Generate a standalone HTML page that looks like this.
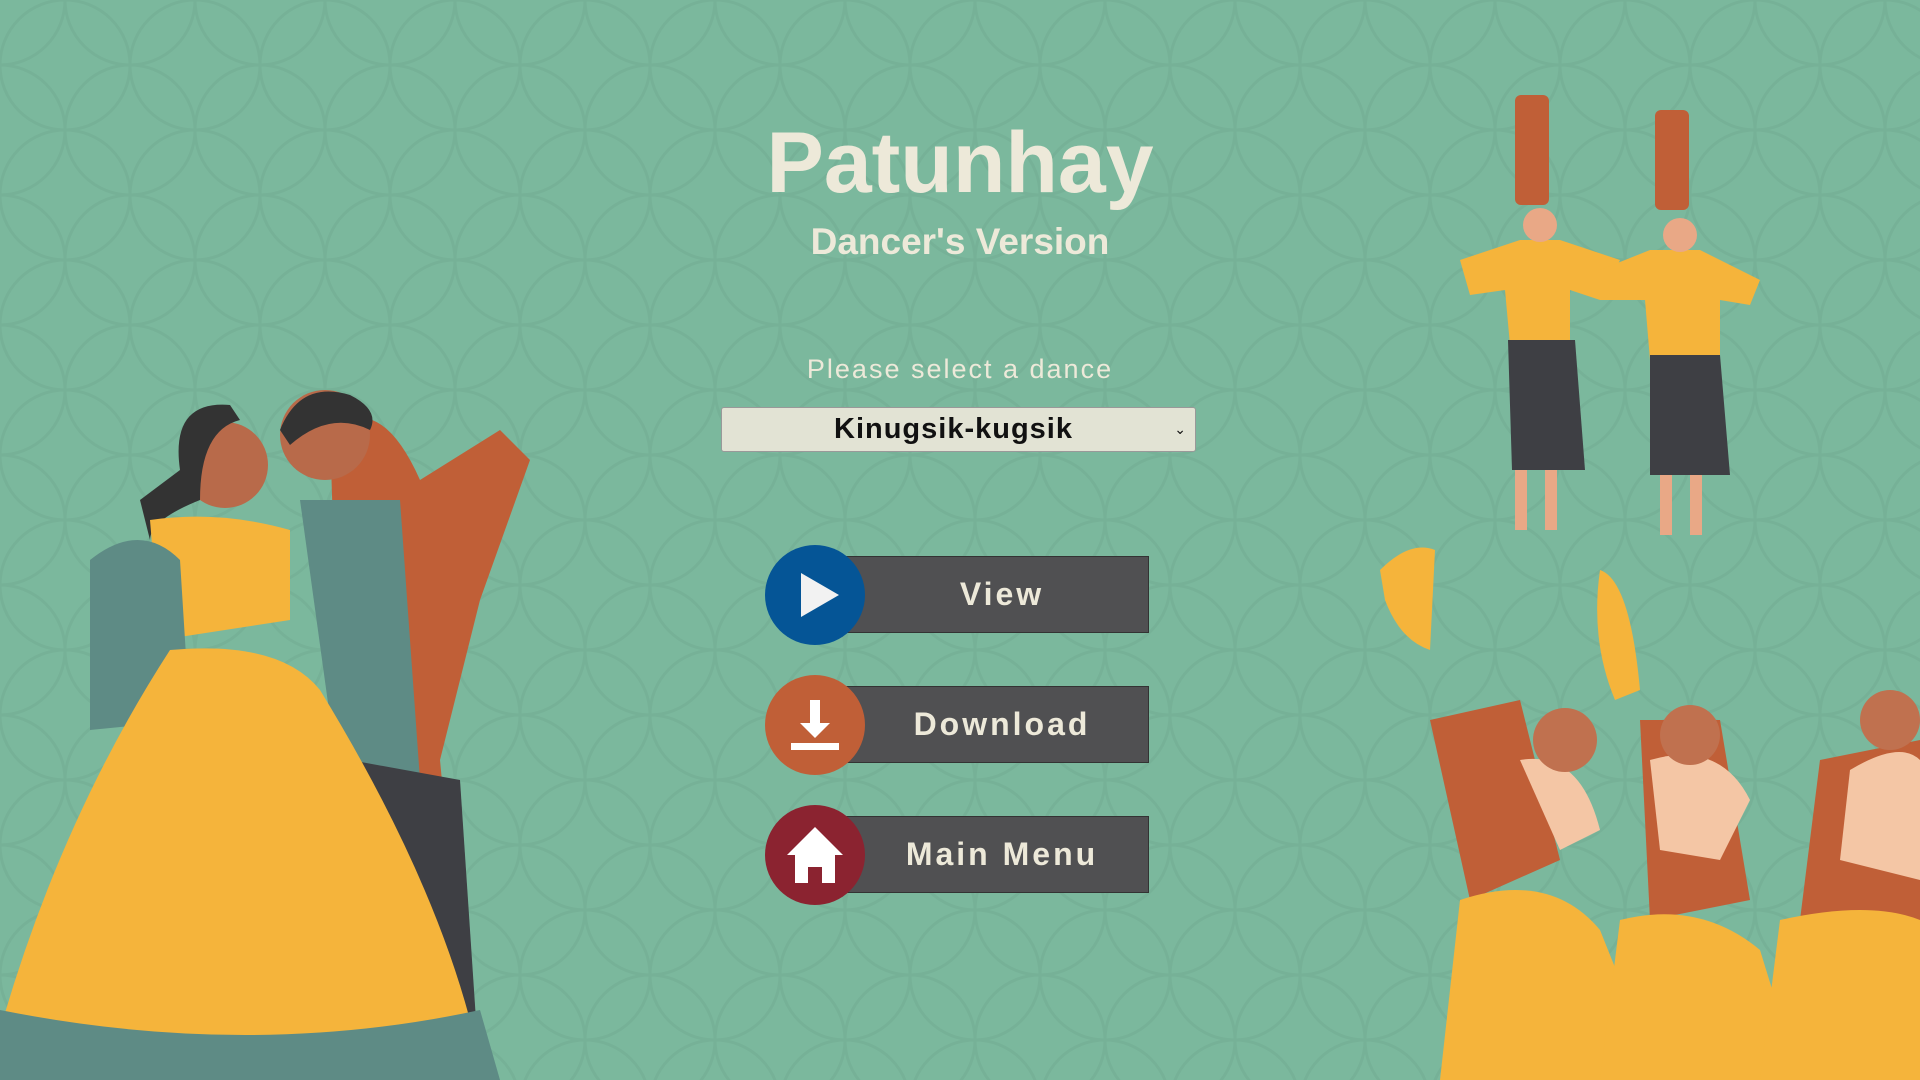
<!DOCTYPE html>
<html><head><meta charset="utf-8"><style>
html,body{margin:0;width:1920px;height:1080px;overflow:hidden;background:#7bb89d;font-family:"Liberation Sans",sans-serif}
.abs{position:absolute}
h1{position:absolute;left:0;width:1920px;top:114px;margin:0;text-align:center;font-size:86px;font-weight:bold;color:#ede9d9}
.sub{top:221px;font-size:37px;font-weight:bold;color:#ede9d9;width:1920px;text-align:center;left:0}
.ps{top:354px;font-size:27px;letter-spacing:2px;color:#ede9d9;width:1920px;text-align:center;left:0}
.sel{left:721px;top:407px;width:475px;height:45px;background:#e2e3d4;border:1px solid #999;border-radius:3px;box-sizing:border-box;font-size:29px;font-weight:bold;color:#111;text-align:center;line-height:43px;letter-spacing:1px;padding-right:10px}
.btn{left:845px;width:304px;height:77px;background:#505052;border:1px solid #333;box-sizing:border-box;color:#ede9d9;font-size:32px;font-weight:bold;letter-spacing:3px;text-align:center;line-height:75px;padding-left:10px}
.c{width:100px;height:100px;border-radius:50%;left:765px}
</style></head><body>
<svg class="abs" style="left:0;top:0" width="1920" height="1080">
<defs><pattern id="p" width="130" height="130" patternUnits="userSpaceOnUse"><g fill="none" stroke="#6fa98f" stroke-width="3" opacity=".45"><circle cx="65" cy="65" r="65"/><circle cx="0" cy="0" r="65"/><circle cx="130" cy="0" r="65"/><circle cx="0" cy="130" r="65"/><circle cx="130" cy="130" r="65"/></g></pattern></defs>
<rect width="1920" height="1080" fill="url(#p)"/>
<!-- left couple -->
<path d="M330 430 Q380 390 420 480 L500 430 L530 460 L480 600 L440 760 L470 1080 L350 1080 Z" fill="#c05f37"/>
<path d="M300 500 L400 500 L420 780 L340 790 Z" fill="#5e8b85"/>
<path d="M350 760 L460 780 L480 1080 L380 1080 Z" fill="#3e3f44"/>
<circle cx="325" cy="435" r="45" fill="#b86a4a"/><path d="M280 430 Q300 380 350 395 Q380 410 370 430 Q330 410 290 445Z" fill="#333"/>
<circle cx="225" cy="465" r="43" fill="#b86a4a"/><path d="M180 470 Q170 400 230 405 L240 420 Q200 430 200 500 Q150 520 150 540 L140 500Z" fill="#333"/>
<path d="M150 520 Q220 510 290 530 L290 620 L160 640 Z" fill="#f5b43b"/>
<path d="M90 560 Q140 520 180 560 L190 720 L90 730 Z" fill="#5e8b85"/>
<path d="M170 650 Q280 640 320 690 Q430 870 470 1020 Q300 1060 0 1030 Q60 820 170 650Z" fill="#f5b43b"/>
<path d="M0 1010 Q250 1060 480 1010 L500 1080 L0 1080Z" fill="#5e8b85"/>
<!-- right top dancers -->
<g fill="#c05f37"><rect x="1515" y="95" width="34" height="110" rx="6"/><rect x="1655" y="110" width="34" height="100" rx="6"/></g>
<g fill="#f5b43b"><path d="M1460 260 L1520 240 L1560 240 L1620 260 L1600 300 L1570 290 L1570 345 L1510 345 L1505 290 L1470 295Z"/><path d="M1600 270 L1650 250 L1700 250 L1760 280 L1750 305 L1720 300 L1720 360 L1650 360 L1645 300 L1600 300Z"/></g>
<g fill="#3e3f44"><path d="M1508 340 L1575 340 L1585 470 L1512 470Z"/><path d="M1650 355 L1720 355 L1730 475 L1650 475Z"/></g>
<g fill="#e9a886"><circle cx="1540" cy="225" r="17"/><circle cx="1680" cy="235" r="17"/><rect x="1515" y="470" width="12" height="60"/><rect x="1545" y="470" width="12" height="60"/><rect x="1660" y="475" width="12" height="60"/><rect x="1690" y="475" width="12" height="60"/></g>
<!-- right bottom dancers -->
<path d="M1380 570 Q1410 540 1435 550 L1430 650 Q1400 640 1385 600Z" fill="#f5b43b"/>
<path d="M1600 570 Q1630 580 1640 690 L1615 700 Q1590 640 1600 570Z" fill="#f5b43b"/>
<path d="M1430 720 L1520 700 L1560 860 L1470 900Z" fill="#c05f37"/>
<path d="M1640 720 L1720 720 L1750 900 L1650 920Z" fill="#c05f37"/>
<path d="M1820 760 L1920 740 L1920 930 L1800 920Z" fill="#c05f37"/>
<path d="M1520 760 Q1580 750 1600 830 L1560 850Z" fill="#f4c6a5"/>
<path d="M1650 760 Q1720 740 1750 800 L1720 860 L1660 850Z" fill="#f4c6a5"/>
<path d="M1850 770 Q1900 740 1920 760 L1920 880 L1840 860Z" fill="#f4c6a5"/>
<circle cx="1565" cy="740" r="32" fill="#c0714f"/><circle cx="1690" cy="735" r="30" fill="#c0714f"/><circle cx="1890" cy="720" r="30" fill="#c0714f"/>
<path d="M1460 900 Q1550 870 1600 930 L1660 1080 L1440 1080Z" fill="#f5b43b"/>
<path d="M1620 920 Q1700 900 1760 950 L1800 1080 L1600 1080Z" fill="#f5b43b"/>
<path d="M1780 920 Q1870 900 1920 920 L1920 1080 L1760 1080Z" fill="#f5b43b"/>
</svg>
<h1>Patunhay</h1>
<div class="abs sub">Dancer's Version</div>
<div class="abs ps">Please select a dance</div>
<div class="abs sel">Kinugsik-kugsik<span style="position:absolute;right:8px;font-size:14px;font-weight:normal">⌄</span></div>
<div class="abs btn" style="top:556px">View</div>
<div class="abs btn" style="top:686px">Download</div>
<div class="abs btn" style="top:816px">Main Menu</div>
<div class="abs c" style="top:545px;background:#055596"><svg width="100" height="100"><path d="M36 28 L74 50 L36 72Z" fill="#f2f2f2"/></svg></div>
<div class="abs c" style="top:675px;background:#c05f37"><svg width="100" height="100"><path d="M45 25 H55 V48 H65 L50 63 L35 48 H45Z M26 68 H74 V75 H26Z" fill="#fff"/></svg></div>
<div class="abs c" style="top:805px;background:#8b2330"><svg width="100" height="100"><path d="M50 22 L78 50 L70 50 L70 78 L57 78 L57 62 L43 62 L43 78 L30 78 L30 50 L22 50Z" fill="#fff"/></svg></div>
</body></html>
